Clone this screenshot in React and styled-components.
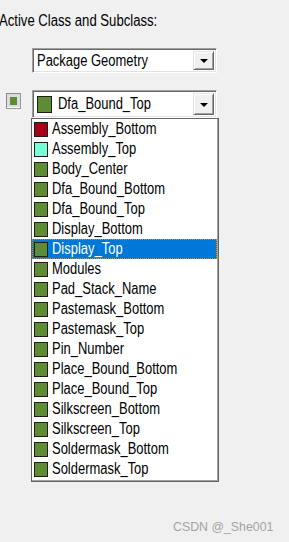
import React from "react";
import styled, { createGlobalStyle } from "styled-components";

const GlobalStyle = createGlobalStyle`
  html, body {
    margin: 0;
    padding: 0;
    background: #f0f0f0;
  }
  body {
    font-family: "Liberation Sans", Arial, sans-serif;
  }
`;

const Page = styled.div`
  position: relative;
  width: 289px;
  height: 542px;
  overflow: hidden;
  background: #f0f0f0;
  color: #000;
  font-size: 16px;
`;

// the dialog font is tall and narrow, so squeeze Liberation Sans sideways
const Narrow = styled.span`
  display: inline-block;
  white-space: nowrap;
  transform: scaleX(${(p) => p.$sx || 0.81});
  transform-origin: left center;
`;

const Label = styled.div`
  padding: 12px 0 0 0;
  margin-left: -1px;
  height: 18px;
  line-height: 18px;
`;

const Row = styled.div`
  display: flex;
  align-items: flex-start;
  margin-top: ${(p) => p.$top}px;
  padding-left: ${(p) => p.$left}px;
  gap: 11px;
`;

const Combo = styled.div`
  box-sizing: border-box;
  width: 185px;
  height: ${(p) => p.$h}px;
  display: flex;
  align-items: stretch;
  background: #fff;
  border-top: 1px solid #a0a0a0;
  border-left: 1px solid #a0a0a0;
  border-right: 1px solid #ffffff;
  border-bottom: 1px solid #ffffff;
  box-shadow: inset 1px 1px 0 #696969, inset -1px -1px 0 #e3e3e3;
  padding: 2px;
`;

const ComboText = styled.div`
  flex: 1;
  display: flex;
  align-items: center;
  gap: 6px;
  padding-left: ${(p) => p.$pad}px;
  line-height: 18px;
  white-space: nowrap;
  overflow: hidden;
`;

const DropButton = styled.div`
  box-sizing: border-box;
  width: 21px;
  display: flex;
  align-items: center;
  justify-content: center;
  background: #f0f0f0;
  border-top: 1px solid #e3e3e3;
  border-left: 1px solid #e3e3e3;
  border-right: 1px solid #696969;
  border-bottom: 1px solid #696969;
  box-shadow: inset 1px 1px 0 #ffffff, inset -1px -1px 0 #a0a0a0;
`;

const Arrow = styled.span`
  width: 0;
  height: 0;
  margin-top: 1px;
  border-left: 4px solid transparent;
  border-right: 4px solid transparent;
  border-top: 4px solid #000;
`;

const Swatch = styled.span`
  box-sizing: border-box;
  flex: none;
  width: ${(p) => p.$w}px;
  height: ${(p) => p.$h}px;
  background: ${(p) => p.$color};
  border: 1px solid #1e1e1e;
`;

const LayerBox = styled.div`
  box-sizing: border-box;
  flex: none;
  width: 15px;
  height: 16px;
  margin-top: 3px;
  padding: 3px;
  background: #dcdcdc;
  border-top: 1px solid #8a8a8a;
  border-left: 1px solid #8a8a8a;
  border-right: 1px solid #9a9a9a;
  border-bottom: 1px solid #9a9a9a;
  box-shadow: inset 0 -1px 0 #ffffff;
`;

const LayerFill = styled.div`
  width: 100%;
  height: 100%;
  background: #5e8b34;
`;

const List = styled.div`
  box-sizing: border-box;
  width: 188px;
  margin-left: 31px;
  background: #fff;
  border: 1px solid #646464;
  box-shadow: inset -1px -1px 0 #a0a0a0;
  padding: 0 0 2px 0;
`;

const Item = styled.div`
  box-sizing: border-box;
  height: 20px;
  display: flex;
  align-items: center;
  gap: 4px;
  padding-left: 2px;
  margin-right: 1px;
  white-space: nowrap;
  overflow: hidden;
  background: ${(p) => (p.$selected ? "#0078d7" : "transparent")};
  color: ${(p) => (p.$selected ? "#ffffff" : "#000000")};
  outline: ${(p) => (p.$selected ? "1px dotted #c98a3c" : "none")};
  outline-offset: -1px;
`;

const Watermark = styled.div`
  position: absolute;
  left: 173px;
  top: 519px;
  font-size: 13px;
  color: #a4a4a4;
`;

const GREEN = "#5e8b34";

const items = [
  { name: "Assembly_Bottom", color: "#a8001a" },
  { name: "Assembly_Top", color: "#74ffd8" },
  { name: "Body_Center", color: GREEN },
  { name: "Dfa_Bound_Bottom", color: GREEN },
  { name: "Dfa_Bound_Top", color: GREEN },
  { name: "Display_Bottom", color: GREEN },
  { name: "Display_Top", color: GREEN, selected: true },
  { name: "Modules", color: GREEN },
  { name: "Pad_Stack_Name", color: GREEN },
  { name: "Pastemask_Bottom", color: GREEN },
  { name: "Pastemask_Top", color: GREEN },
  { name: "Pin_Number", color: GREEN },
  { name: "Place_Bound_Bottom", color: GREEN },
  { name: "Place_Bound_Top", color: GREEN },
  { name: "Silkscreen_Bottom", color: GREEN },
  { name: "Silkscreen_Top", color: GREEN },
  { name: "Soldermask_Bottom", color: GREEN },
  { name: "Soldermask_Top", color: GREEN },
];

export default function App() {
  return (
    <Page>
      <GlobalStyle />
      <Label>
        <Narrow $sx={0.82}>Active Class and Subclass:</Narrow>
      </Label>

      <Row $top={18} $left={32}>
        <Combo $h={25}>
          <ComboText $pad={2}>
            <Narrow>Package Geometry</Narrow>
          </ComboText>
          <DropButton>
            <Arrow />
          </DropButton>
        </Combo>
      </Row>

      <Row $top={17} $left={6}>
        <LayerBox>
          <LayerFill />
        </LayerBox>
        <Combo $h={28}>
          <ComboText $pad={2}>
            <Swatch $w={15} $h={17} $color={GREEN} />
            <Narrow>Dfa_Bound_Top</Narrow>
          </ComboText>
          <DropButton>
            <Arrow />
          </DropButton>
        </Combo>
      </Row>

      <List>
        {items.map((it) => (
          <Item key={it.name} $selected={it.selected}>
            <Swatch $w={14} $h={15} $color={it.color} />
            <Narrow>{it.name}</Narrow>
          </Item>
        ))}
      </List>

      <Watermark>
        <Narrow $sx={0.95}>CSDN @_She001</Narrow>
      </Watermark>
    </Page>
  );
}
